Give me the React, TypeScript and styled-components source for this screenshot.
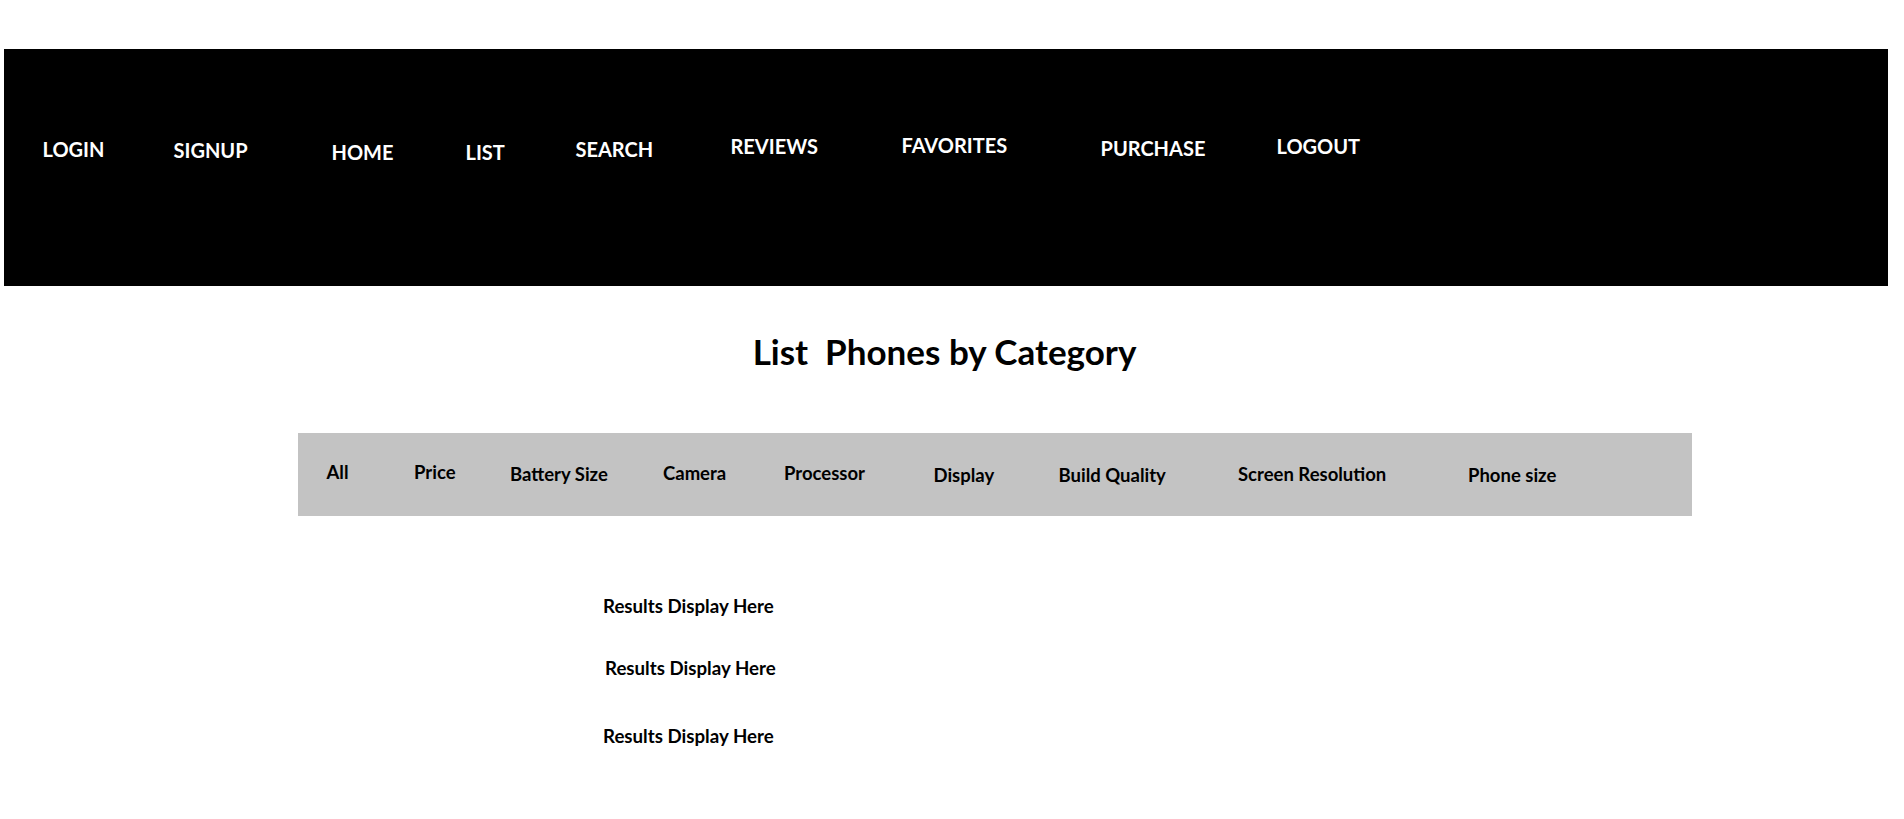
import React from "react";
import styled, { createGlobalStyle } from "styled-components";

const Global = createGlobalStyle`
  html, body { margin: 0; padding: 0; background: #fff; }
  body { font-family: "Lato", "Liberation Sans", sans-serif; color: #000; }
`;

const Page = styled.div`
  display: flex;
  flex-direction: column;
  padding-top: 49px;
`;

const Header = styled.header`
  margin: 0 16px 0 4px;
  height: 237px;
  background: #000;
  display: flex;
  align-items: flex-start;
  padding: 88px 0 0 38.5px;
  box-sizing: border-box;
`;

const NavItem = styled.a<{ $w?: number; $dy: number }>`
  display: block;
  flex: 0 0 ${(p) => (p.$w ? `${p.$w}px` : "auto")};
  margin-top: ${(p) => p.$dy}px;
  color: #fff;
  font-weight: 700;
  font-size: 20px;
  line-height: 24px;
  text-decoration: none;
  white-space: nowrap;
`;

const Title = styled.h1`
  margin: 43px 0 0;
  text-align: center;
  font-size: 35px;
  line-height: 44px;
  font-weight: 700;
  white-space: pre;
  padding-right: 15px;
`;

const CategoryBar = styled.nav`
  margin: 60px 0 0 297.5px;
  width: 1394px;
  height: 83px;
  background: #c3c3c3;
  display: flex;
  align-items: flex-start;
  padding: 29px 0 0 29px;
  box-sizing: border-box;
`;

const Category = styled.span<{ $w?: number; $dy: number }>`
  flex: 0 0 ${(p) => (p.$w ? `${p.$w}px` : "auto")};
  margin-top: ${(p) => p.$dy}px;
  font-size: 18.5px;
  line-height: 20px;
  font-weight: 700;
  white-space: nowrap;
`;

const Results = styled.section`
  display: flex;
  flex-direction: column;
  align-items: flex-start;
  padding-left: 603px;
  margin-top: 80px;
`;

const ResultLine = styled.p<{ $dx: number; $mt: number }>`
  margin: ${(p) => p.$mt}px 0 0 ${(p) => p.$dx}px;
  font-size: 18.7px;
  line-height: 20px;
  font-weight: 700;
  white-space: nowrap;
`;

const navItems = [
  { label: "LOGIN", w: 131, dy: 0 },
  { label: "SIGNUP", w: 158, dy: 1 },
  { label: "HOME", w: 134, dy: 3 },
  { label: "LIST", w: 110, dy: 3 },
  { label: "SEARCH", w: 155, dy: 0 },
  { label: "REVIEWS", w: 171, dy: -3 },
  { label: "FAVORITES", w: 199, dy: -4 },
  { label: "PURCHASE", w: 176, dy: -1 },
  { label: "LOGOUT", dy: -3 },
];

const categories = [
  { label: "All", w: 87.5, dy: 0 },
  { label: "Price", w: 96, dy: 0 },
  { label: "Battery Size", w: 153, dy: 1.5 },
  { label: "Camera", w: 121, dy: 0.5 },
  { label: "Processor", w: 149.5, dy: 0.5 },
  { label: "Display", w: 125, dy: 2.5 },
  { label: "Build Quality", w: 179.5, dy: 2.5 },
  { label: "Screen Resolution", w: 230, dy: 1.5 },
  { label: "Phone size", dy: 2.5 },
];

export default function App() {
  return (
    <>
      <Global />
      <Page>
        <Header>
          {navItems.map((n) => (
            <NavItem key={n.label} href="#" $w={n.w} $dy={n.dy}>
              {n.label}
            </NavItem>
          ))}
        </Header>
        <Title>{"List  Phones by Category"}</Title>
        <CategoryBar>
          {categories.map((c) => (
            <Category key={c.label} $w={c.w} $dy={c.dy}>
              {c.label}
            </Category>
          ))}
        </CategoryBar>
        <Results>
          <ResultLine $dx={0} $mt={0}>Results Display Here</ResultLine>
          <ResultLine $dx={2} $mt={42}>Results Display Here</ResultLine>
          <ResultLine $dx={0} $mt={48}>Results Display Here</ResultLine>
        </Results>
      </Page>
    </>
  );
}
